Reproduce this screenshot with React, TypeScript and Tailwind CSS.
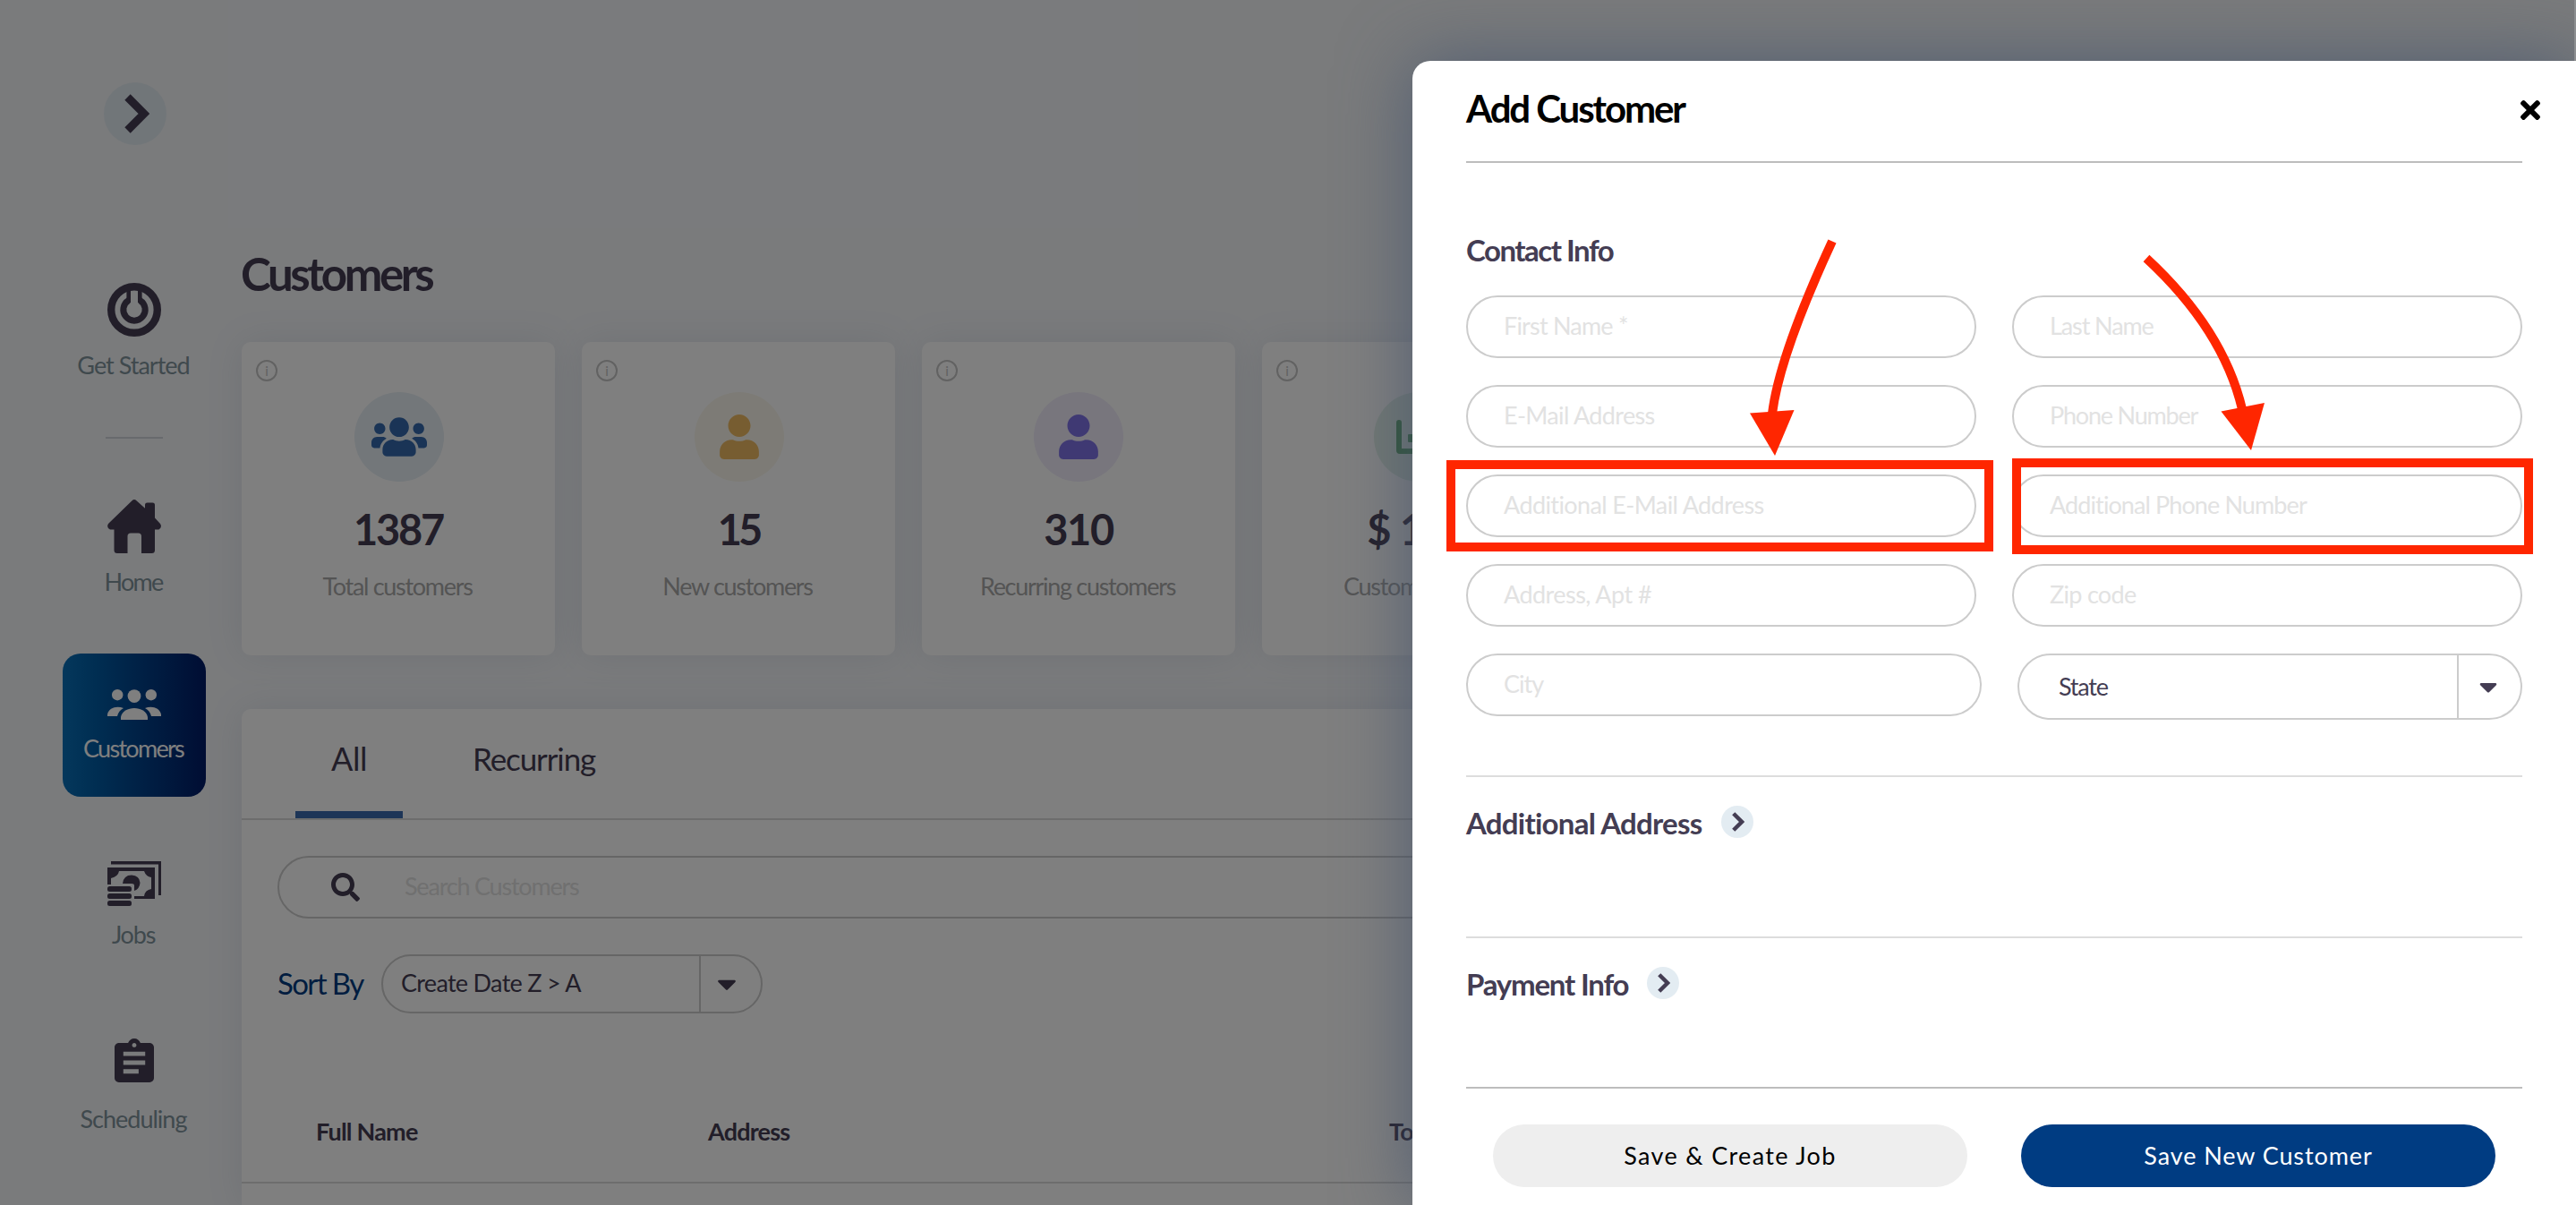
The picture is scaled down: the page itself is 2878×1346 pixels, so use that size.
import { FaSearch, FaTimes, FaUser, FaUsers, FaCaretDown } from "react-icons/fa";

const GetStartedIcon = () => (
  <svg viewBox="0 0 60 60" className="size-[60px]" fill="none" stroke="currentColor">
    <circle cx="30" cy="30" r="25.8" strokeWidth="8.4" />
    <path d="M23.7 19.5A12.2 12.2 0 1 0 36.3 19.5" strokeWidth="7" />
    <path d="M23.7 6V22M36.3 6V22" strokeWidth="4.6" />
  </svg>
);

const HomeIcon = () => (
  <svg viewBox="0 0 60 60" className="size-[60px]" fill="currentColor">
    <path d="M27.5 1.2Q30 -1 32.5 1.2L42 9.8V6Q42 3.5 44.5 3.5H50.5Q53 3.5 53 6V20.5L59 27Q61.5 31 57.5 33.5H53V56.5Q53 60 49.5 60H38V41Q38 37.5 34.5 37.5H26Q22.5 37.5 22.5 41V60H11Q7.5 60 7.5 56.5V33.5H3Q-1.5 31 1 27Z" />
  </svg>
);

const GroupIcon = () => (
  <svg viewBox="0 0 60 34" className="h-[34px] w-[60px]" fill="currentColor">
    <circle cx="30" cy="7.6" r="7.4" />
    <circle cx="11.2" cy="6.2" r="6.2" />
    <circle cx="48.8" cy="6.2" r="6.2" />
    <path d="M15 34V31C17 17.5 43 17.5 45 31V34Z" />
    <path d="M0 30V28C1.5 20 11 18 18 21C14 23 12 26 11 30Z" />
    <path d="M60 30V28C58.5 20 49 18 42 21C46 23 48 26 49 30Z" />
  </svg>
);

const JobsIcon = () => (
  <svg viewBox="0 0 60 50" className="h-[50px] w-[60px]" fill="currentColor">
    <path d="M4 0H60V38H57V3.5H4Z" />
    <path
      fillRule="evenodd"
      d="M0 7H53V42H30V39H41Q42 32 49 31V18Q43 17 41 11H13Q12 17 4 19V26H0Z"
    />
    <path d="M17 25Q18 15.500 27 15.500Q36 16 36.500 24Q36 31 30 33V27Q30 25 27 25Z" />
    <rect y="28" width="27" height="6" rx="2.5" />
    <rect y="36" width="27" height="6" rx="2.5" />
    <rect y="44" width="27" height="6" rx="2.5" />
  </svg>
);

const SchedulingIcon = () => (
  <svg viewBox="3 1 18 20" className="h-[49px] w-[44px]" fill="currentColor">
    <path d="M19 3h-4.18C14.4 1.84 13.3 1 12 1c-1.300 0-2.400.84-2.820 2H5c-1.100 0-2 .9-2 2v14c0 1.100.9 2 2 2h14c1.100 0 2-.9 2-2V5c0-1.100-.9-2-2-2zm-7 0c.55 0 1 .45 1 1s-.45 1-1 1-1-.45-1-1 .45-1 1-1zm2 14H7v-2h7v2zm3-4H7v-2h10v2zm0-4H7V7h10v2z" />
  </svg>
);

const Chevron = ({ className }: { className: string }) => (
  <svg viewBox="0 0 28 44" className={className} fill="none" stroke="currentColor" strokeWidth="9">
    <path d="M3.5 3.5L22 22L3.5 40.5" />
  </svg>
);

const ChartIcon = () => (
  <svg viewBox="0 0 50 38" className="h-[38px] w-[50px]" fill="currentColor">
    <path d="M0 3Q0 0 3 0Q6 0 6 3V32H50V38H4Q0 38 0 34Z" />
    <rect x="13" y="16" width="8" height="9" rx="1" />
  </svg>
);

const stats = [
  {
    value: "1387",
    label: "Total customers",
    icon: <FaUsers className="size-[62px]" />,
    circle: "ml-0.5 bg-[#e6eef4] text-[#3469ac]",
    tracking: "tracking-[-2.2px]",
  },
  {
    value: "15",
    label: "New customers",
    icon: <FaUser className="size-[50px]" />,
    circle: "ml-0.5 bg-[#faf7ec] text-[#efba62]",
    tracking: "tracking-[-4px]",
  },
  {
    value: "310",
    label: "Recurring customers",
    icon: <FaUser className="size-[50px]" />,
    circle: "bg-[#f0ecfb] text-[#7f72e6]",
    tracking: "tracking-[-1.5px]",
  },
  {
    value: "$ 125",
    label: "Customer value",
    icon: <ChartIcon />,
    circle: "bg-[#e3f1e8] text-[#62a971]",
    tracking: "tracking-[-1px]",
  },
];

const Sidebar = () => (
  <aside className="flex w-[270px] shrink-0 flex-col items-center pl-[30px] pt-[92px] text-[27px] leading-[34px] text-[#7f929b]">
    <button className="ml-px flex size-[70px] items-center justify-center rounded-full bg-[#e3ecf2] text-[#443d53]">
      <Chevron className="ml-1 h-11 w-7" />
    </button>
    <div className="mt-[154px] flex flex-col items-center">
      <span className="text-[#443d53]"><GetStartedIcon /></span>
      <span className="mr-0.5 mt-[15px] tracking-[-1px]">Get Started</span>
    </div>
    <div className="mt-[63px] h-0.5 w-16 bg-[#d0d5da]" />
    <div className="mt-[68px] flex flex-col items-center">
      <span className="text-[#443d53]"><HomeIcon /></span>
      <span className="mr-0.5 mt-[15px] tracking-[-1.8px]">Home</span>
    </div>
    <div className="mt-[63px] flex size-40 flex-col items-center rounded-[20px] bg-linear-to-r from-[#0a70b8] to-[#001a66] pt-10 text-white">
      <GroupIcon />
      <span className="mr-0.5 mt-[15px] tracking-[-1.7px]">Customers</span>
    </div>
    <div className="mt-[72px] flex flex-col items-center">
      <span className="text-[#443d53]"><JobsIcon /></span>
      <span className="mr-0.5 mt-[15px] tracking-[-1.2px]">Jobs</span>
    </div>
    <div className="mt-[99px] flex flex-col items-center">
      <span className="ml-px text-[#443d53]"><SchedulingIcon /></span>
      <span className="mr-0.5 mt-[24px] tracking-[-1px]">Scheduling</span>
    </div>
  </aside>
);

const StatCard = ({ value, label, icon, circle, tracking }: (typeof stats)[number]) => (
  <div className="relative flex size-[350px] shrink-0 flex-col items-center rounded-[10px] bg-white pt-14 shadow-[0_0_40px_rgba(90,110,140,0.12)]">
    <span className="absolute left-4 top-5 flex size-6 items-center justify-center rounded-full border-2 border-[#c4c4c4] text-[15px] leading-none text-[#c4c4c4]">
      i
    </span>
    <div className={`flex size-[100px] items-center justify-center rounded-full ${circle}`}>{icon}</div>
    <span className={`mt-[25px] whitespace-nowrap text-[47px] font-bold leading-[56px] text-[#443d53] ${tracking}`}>
      {value}
    </span>
    <span className="mr-0.5 mt-[19px] whitespace-nowrap text-[27px] leading-[34px] tracking-[-1.3px] text-[#a9a9a9]">
      {label}
    </span>
  </div>
);

const CustomerPage = () => (
  <div className="flex h-full w-full overflow-hidden bg-[#f4f6f9]">
    <Sidebar />
    <main className="flex w-[2600px] shrink-0 flex-col pt-[274px] text-[#443d53]">
      <h1 className="-ml-px text-[51px] font-bold leading-[64px] tracking-[-3.4px]">Customers</h1>
      <div className="mt-11 flex gap-[30px]">
        {stats.map((stat) => (
          <StatCard key={stat.label} {...stat} />
        ))}
      </div>
      <section className="mt-[60px] h-[600px] rounded-t-[10px] bg-white shadow-[0_0_40px_rgba(90,110,140,0.12)]">
        <div className="flex h-[124px] border-b-2 border-[#dadada] pl-[60px] text-[36px] leading-[44px]">
          <div className="flex w-[120px] justify-center border-b-8 border-[#3a6aaf] pt-[33px] tracking-[-0.5px]">All</div>
          <div className="ml-[78px] pt-[33px] text-[35px] tracking-[-1.1px]">Recurring</div>
        </div>
        <div className="ml-10 mt-10 flex h-[70px] items-center rounded-full border-2 border-[#cccccc] pl-[58px]">
          <FaSearch className="size-8" />
          <span className="-mt-0.5 ml-[50px] text-[27px] tracking-[-1.2px] text-[#e0e0e0]">Search Customers</span>
        </div>
        <div className="ml-10 mt-10 flex items-center">
          <span className="-mt-0.5 w-[116px] text-[33px] leading-[44px] tracking-[-1.6px] text-[#003b80]">Sort By</span>
          <div className="flex h-[66px] w-[426px] items-center rounded-full border-2 border-[#cccccc] text-[27px]">
            <span className="-mt-0.5 flex-1 pl-5 tracking-[-0.7px]">Create Date Z &gt; A</span>
            <span className="flex h-full w-[69px] items-center border-l-2 border-[#cccccc] pl-[12px]">
              <FaCaretDown className="size-[34px]" />
            </span>
          </div>
        </div>
        <div className="mt-[102px] flex h-[88px] border-b-2 border-[#dadada] pt-[12px] text-[27px] font-bold leading-[36px] tracking-[-0.8px]">
          <span className="w-[436px] pl-[83px]">Full Name</span>
          <span className="w-[761px] pl-[85px]">Address</span>
          <span className="pl-[85px]">Total</span>
        </div>
      </section>
    </main>
  </div>
);

const fields = [
  { label: "First Name *", tracking: "tracking-[-0.8px]" },
  { label: "Last Name", tracking: "tracking-[-1.1px]" },
  { label: "E-Mail Address", tracking: "tracking-[-0.65px]" },
  { label: "Phone Number", tracking: "tracking-[-1.2px]" },
  { label: "Additional E-Mail Address", tracking: "tracking-[-0.6px]" },
  { label: "Additional Phone Number", tracking: "tracking-[-0.9px]" },
  { label: "Address, Apt #", tracking: "tracking-[-0.55px]" },
  { label: "Zip code", tracking: "tracking-[-0.7px]" },
];

const Field = ({ label, className }: { label: string; className: string }) => (
  <div className={`flex h-[70px] items-center rounded-full border-2 border-[#cccccc] pb-px pl-10 text-[27px] text-[#e2e2e2] ${className}`}>
    {label}
  </div>
);

const Expander = ({ title, className }: { title: string; className: string }) => (
  <div className={`flex items-start border-t-2 border-[#dddddd] pt-8 ${className}`}>
    <h3 className="-mt-[3px] text-[33px] font-bold leading-[44px] text-[#443d53]">{title}</h3>
    <span className="ml-[21px] flex size-9 items-center justify-center rounded-full bg-[#e3ecf2] text-[#443d53]">
      <Chevron className="ml-0.5 h-[22px] w-[14px]" />
    </span>
  </div>
);

const AddCustomerDrawer = () => (
  <div className="absolute left-[1578px] top-[68px] flex h-[1278px] w-[1300px] flex-col rounded-tl-[20px] bg-white px-[60px] shadow-[0_0_80px_rgba(70,85,110,0.8)]">
    <header className="flex h-[114px] items-start justify-between border-b-2 border-[#bdbdbd] pt-[26px]">
      <h2 className="text-[42px] font-bold leading-[54px] tracking-[-2.1px] text-black">Add Customer</h2>
      <FaTimes className="-mr-[25px] mt-[13px] size-[32px] text-black" />
    </header>
    <h3 className="mt-[75px] text-[33px] font-bold leading-[44px] tracking-[-1.5px] text-[#443d53]">Contact Info</h3>
    <div className="mt-[29px] grid grid-cols-2 gap-x-10 gap-y-[30px]">
      {fields.map(({ label, tracking }) => (
        <Field key={label} label={label} className={tracking} />
      ))}
    </div>
    <div className="mt-[30px] flex items-start justify-between">
      <Field label="City" className="w-[576px] tracking-[-1px]" />
      <div className="flex h-[74px] w-[564px] items-center rounded-full border-2 border-[#cccccc] text-[27px] text-[#443d53]">
        <span className="flex-1 pl-11 tracking-[-1.2px]">State</span>
        <span className="flex h-full w-[71px] items-center border-l-2 border-[#cccccc] pl-[17px]">
          <FaCaretDown className="size-[32px]" />
        </span>
      </div>
    </div>
    <Expander title="Additional Address" className="mt-[62px] h-[180px] tracking-[-0.75px]" />
    <Expander title="Payment Info" className="h-[168px] tracking-[-1.2px]" />
    <footer className="flex gap-[60px] border-t-2 border-[#bdbdbd] px-[30px] pt-10 text-[27px]">
      <button className="h-[70px] w-[530px] rounded-full bg-[#eeeeee] tracking-[1.35px] text-black">Save &amp; Create Job</button>
      <button className="h-[70px] w-[530px] rounded-full bg-[#003c82] tracking-[0.9px] text-white">Save New Customer</button>
    </footer>
  </div>
);

// Red boxes and arrows pointing at the two additional fields
const Annotations = () => (
  <>
    <div className="absolute left-[1616px] top-[514px] h-[102px] w-[611px] border-[10px] border-[#ff2600]" />
    <div className="absolute left-[2248px] top-[512px] h-[107px] w-[582px] border-[10px] border-[#ff2600]" />
    <svg
      viewBox="1900 250 700 270"
      className="absolute left-[1900px] top-[250px] h-[270px] w-[700px]"
      fill="none"
      stroke="#ff2600"
      strokeWidth="10"
    >
      <path d="M2047 269.5Q1988 397 1980 462" />
      <path d="M2398 288.5Q2484 368 2505 457" />
      <path d="M1955 461.5L2004.5 458L1983 509Z" fill="#ff2600" stroke="none" />
      <path d="M2481.5 459.5L2530 450L2515 503Z" fill="#ff2600" stroke="none" />
    </svg>
  </>
);

export default function App() {
  return (
    <div className="relative h-[1346px] w-[2878px] overflow-hidden font-['Lato',sans-serif]">
      <CustomerPage />
      <div className="absolute inset-0 bg-black/50" />
      <AddCustomerDrawer />
      {/* Scrollbar edge above the drawer */}
      <div className="absolute right-0 top-0 h-[68px] w-0.5 bg-[#8c8e90]" />
      <Annotations />
    </div>
  );
}
